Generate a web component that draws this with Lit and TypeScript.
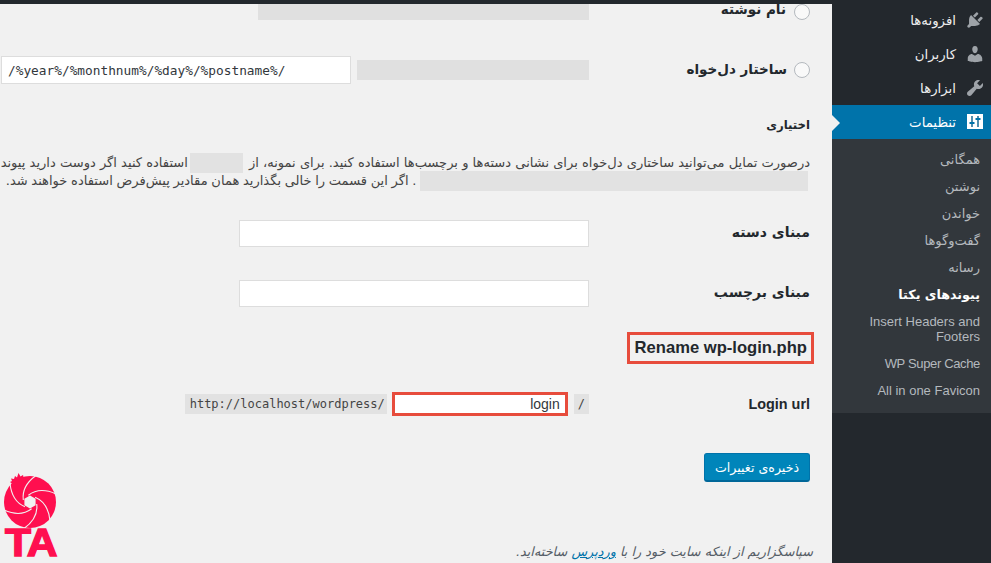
import { LitElement, html, css, svg } from "lit";
import { customElement } from "lit/decorators.js";

const ZW = "\u200c";

const blades = [0, 60, 120, 180, 240, 300].map(
  (a) => svg`<path d="M-6.7 -2C-8 -12 -3 -20 6 -26.5" transform="rotate(${a})" fill="none" stroke="#f1f1f1" stroke-width="1.1"/>`
);

@customElement("app-root")
export class AppRoot extends LitElement {
  static styles = css`
    :host { display: block; width: 991px; height: 563px; overflow: hidden; font-family: "DejaVu Sans", sans-serif; }
    .page { display: flex; width: 991px; height: 563px; background: #f1f1f1; position: relative; overflow: hidden; }
    .main { width: 832px; flex: none; direction: rtl; display: flex; flex-direction: column; color: #23282d; }
    .topbar { height: 4px; background: #23282d; flex: none; position: relative; z-index: 1; }
    .row { display: grid; grid-template-columns: 243px 1fr; flex: none; }
    .lab { padding-right: 22px; display: flex; align-items: center; gap: 7px; font-size: 13.5px; font-weight: 700; white-space: nowrap; }
    .lab.big { font-size: 14px; padding-bottom: 3px; }
    .lab .up { margin-top: -2px; }
    .field { display: flex; align-items: center; gap: 6px; }
    .radio { width: 16px; height: 16px; box-sizing: border-box; border: 1px solid #b4b9be; border-radius: 50%; background: #f9f9f9; flex: none; }
    .r1 { height: 16px; margin-bottom: 36px; }
    .r1 .field { align-items: stretch; }
    .r1 .lab { align-items: flex-start; gap: 8px; line-height: 11px; }
    .redact { background: #e0e0e0; height: 20px; }
    .r1w { width: 331px; height: 16px; }
    .r2w { width: 232px; }
    .r2 { height: 28px; margin-bottom: 31px; }
    .txt { box-sizing: border-box; height: 28px; border: 1px solid #ddd; background: #fff; border-radius: 0; outline: none; margin: 0; font-size: 13px; color: #32373c; }
    .mono { direction: ltr; text-align: left; width: 350px; padding: 0 6px; font-family: "DejaVu Sans Mono", monospace; font-size: 12.8px; }
    .wide { width: 350px; height: 27px; padding: 0; }
    .h { height: 20px; line-height: 20px; margin: 0 22px 18px 0; font-size: 11.7px; font-weight: 700; flex: none; }
    .para { flex: none; margin: 0 22px 31px 0; font-size: 13.05px; color: #444; }
    .line { height: 18px; line-height: 18px; white-space: nowrap; }
    .l2 { word-spacing: -0.5px; }
    .gap { display: inline-block; background: #e2e2e2; height: 20px; vertical-align: middle; }
    .g1 { width: 53px; margin: 0 6px 0 2px; }
    .g2 { width: 388px; margin-right: 2px; }
    .r3 { height: 27px; margin-bottom: 33px; }
    .r4 { height: 27px; margin-bottom: 25px; }
    .rename { flex: none; align-self: flex-start; margin-right: 18px; height: 32px; box-sizing: border-box; border: 3px solid #e74c3c; padding: 0 4px 0 5px; direction: ltr; font: 700 16.6px/25px "Liberation Sans", sans-serif; margin-bottom: 27px; white-space: nowrap; }
    .r5 { height: 25px; margin-bottom: 37px; }
    .latin { font-family: "Liberation Sans", sans-serif; font-size: 14.4px; }
    .code { direction: ltr; font: 12px/20px "DejaVu Sans Mono", monospace; background: #e2e2e2; color: #444; padding: 0 2px 0 5px; height: 20px; white-space: pre; }
    .code.slash { padding: 0 4px; }
    .login { box-sizing: border-box; width: 176px; height: 24px; margin: 0 0 0 -1px; border: 3px solid #e74c3c; background: #fff; direction: ltr; text-align: right; padding: 0 5px; font: 14px "Liberation Sans", sans-serif; color: #32373c; outline: none; }
    .save { flex: none; align-self: flex-start; margin: 0 22px 62px 0; width: 106px; height: 29px; box-sizing: border-box; background: #0085ba; border: 1px solid #0073aa; border-bottom: 2px solid #006799; border-radius: 3px; color: #fff; font: 12.6px "DejaVu Sans", sans-serif; padding: 0; }
    .foot { flex: none; margin-right: 19px; height: 16px; line-height: 16px; font-size: 12.85px; font-style: italic; color: #555d66; white-space: nowrap; }
    .foot a { color: #0073aa; text-decoration: underline; }
    .logo { position: absolute; left: 3px; top: 472px; width: 56px; height: 58px; }
    .ta { position: absolute; left: 5px; top: 524px; font: 900 38px/38px "Liberation Sans", sans-serif; color: #ff0f4f; -webkit-text-stroke: 1.4px #ff0f4f; letter-spacing: -1px; transform: scaleX(1.12); transform-origin: left; }
    .side { width: 159px; flex: none; background: #23282d; direction: rtl; padding-top: 3px; box-sizing: border-box; position: relative; }
    .item { height: 34px; display: flex; align-items: center; gap: 9px; padding-right: 6px; color: #eee; font-size: 13.3px; box-sizing: border-box; }
    .item svg { width: 20px; height: 20px; flex: none; }
    .item.cur { background: #0073aa; color: #fff; }
    .arrow { position: absolute; left: 0; top: 115px; width: 0; height: 0; border: 8px solid transparent; border-left-color: #f1f1f1; border-right-width: 0; }
    .sub { background: #32373c; padding: 7px 11px 9px 0; }
    .si { height: 27px; line-height: 27px; font-size: 13px; color: #b4b9be; white-space: nowrap; }
    .si.on { color: #fff; font-weight: 700; font-size: 12.7px; }
    .si.en { font: 13px/27px "Liberation Sans", sans-serif; direction: ltr; text-align: right; }
    .si.tight { letter-spacing: -0.35px; }
    .si.two { height: 42px; line-height: 15px; padding-top: 6px; box-sizing: border-box; white-space: normal; padding-left: 30px; }
  `;

  render() {
    return html`<div class="page">
      <div class="main">
        <div class="topbar"></div>
        <div class="row r1">
          <div class="lab"><span class="radio"></span><span>نام نوشته</span></div>
          <div class="field"><div class="redact r1w"></div></div>
        </div>
        <div class="row r2">
          <div class="lab"><span class="radio"></span><span class="up">ساختار دل${ZW}خواه</span></div>
          <div class="field">
            <div class="redact r2w"></div>
            <input class="txt mono" value="/%year%/%monthnum%/%day%/%postname%/" />
          </div>
        </div>
        <div class="h">اختیاری</div>
        <div class="para">
          <div class="line">درصورت تمایل می${ZW}توانید ساختاری دل${ZW}خواه برای نشانی دسته${ZW}ها و برچسب${ZW}ها استفاده کنید. برای نمونه، از<span class="gap g1"></span>استفاده کنید اگر دوست دارید پیوند</div>
          <div class="line l2"><span class="gap g2"></span> . اگر این قسمت را خالی بگذارید همان مقادیر پیش${ZW}فرض استفاده خواهند شد.</div>
        </div>
        <div class="row r3">
          <div class="lab big">مبنای دسته</div>
          <div class="field"><input class="txt wide" /></div>
        </div>
        <div class="row r4">
          <div class="lab big">مبنای برچسب</div>
          <div class="field"><input class="txt wide" /></div>
        </div>
        <div class="rename">Rename wp-login.php</div>
        <div class="row r5">
          <div class="lab latin"><span dir="ltr">Login url</span></div>
          <div class="field">
            <span class="code slash">/</span>
            <input class="login" value="login" />
            <span class="code">http://localhost/wordpress/</span>
          </div>
        </div>
        <button class="save">ذخیره${ZW}ی تغییرات</button>
        <div class="foot">سپاسگزاریم از اینکه سایت خود را با <a>وردپرس</a> ساخته${ZW}اید.</div>
      </div>
      <div class="side">
        <div class="item">
          <svg viewBox="0 0 20 20"><path fill="#9ea3a8" d="M13.11 4.36L9.87 7.6 8 5.73l3.24-3.24c.35-.34 1.05-.2 1.56.32.52.51.66 1.21.31 1.55zm-8 1.77l.91-1.12 9.01 9.01-1.19.84c-.71.71-2.63 1.16-3.82 1.16H6.14L4.9 17.26c-.59.59-1.54.59-2.12 0-.59-.58-.59-1.53 0-2.12l1.24-1.24v-3.88c0-1.13.4-3.05 1.09-3.89zm7.26 3.97l3.24-3.24c.34-.35 1.04-.21 1.55.31.52.51.66 1.21.31 1.55l-3.24 3.25z"/></svg>
          <span>افزونه${ZW}ها</span>
        </div>
        <div class="item">
          <svg viewBox="0 0 20 20"><path fill="#9ea3a8" d="M10 9.25c-2.27 0-2.73-3.44-2.73-3.44C7 4.02 7.82 2 9.97 2c2.16 0 2.98 2.02 2.71 3.81 0 0-.41 3.44-2.68 3.44zm0 2.57L12.72 10c2.39 0 4.52 2.33 4.52 4.53v2.49s-3.65 1.13-7.24 1.13c-3.65 0-7.24-1.13-7.24-1.13v-2.49c0-2.25 1.94-4.48 4.15-4.48z"/></svg>
          <span>کاربران</span>
        </div>
        <div class="item">
          <svg viewBox="0 0 20 20"><path fill="#9ea3a8" d="M16.68 9.77c-1.34 1.34-3.3 1.67-4.95.99l-5.41 6.52c-.99.99-2.59.99-3.57 0-.99-.98-.99-2.58 0-3.57l6.52-5.42c-.68-1.65-.35-3.61.99-4.95 1.28-1.28 3.12-1.62 4.72-1.06l-2.89 2.89 2.82 2.82 2.89-2.89c.56 1.6.22 3.44-1.06 4.72z"/></svg>
          <span>ابزارها</span>
        </div>
        <div class="item cur">
          <svg viewBox="0 0 20 20"><rect x="2" y="2" width="16" height="15" fill="#fff"/><path stroke="#0a5f8c" stroke-width="1.4" d="M7 4v11M13 4v11" fill="none"/><path fill="#0073aa" d="M4.5 10h5v2h-5zM10.5 6h5v2h-5z"/></svg>
          <span>تنظیمات</span>
        </div>
        <div class="arrow"></div>
        <div class="sub">
          <div class="si">همگانی</div>
          <div class="si">نوشتن</div>
          <div class="si">خواندن</div>
          <div class="si">گفت${ZW}وگوها</div>
          <div class="si">رسانه</div>
          <div class="si on">پیوندهای یکتا</div>
          <div class="si en two">Insert Headers and Footers</div>
          <div class="si en tight">WP Super Cache</div>
          <div class="si en">All in one Favicon</div>
        </div>
      </div>
      <svg class="logo" viewBox="0 0 56 58">
        <path fill="#ff0f4f" d="M7 10l2-1-1-2.5 3 .5 1-3 2 1.5L15.5 1l2 3.5L20 3l1 4 4 1-10 8z"/>
        <g transform="translate(27 30)">
          <circle r="26" fill="#ff0f4f"/>
          ${blades}
          <polygon points="0,-6.5 5.6,-3.2 5.6,3.2 0,6.5 -5.6,3.2 -5.6,-3.2" fill="#f1f1f1"/>
        </g>
      </svg>
      <div class="ta">TA</div>
    </div>`;
  }
}
